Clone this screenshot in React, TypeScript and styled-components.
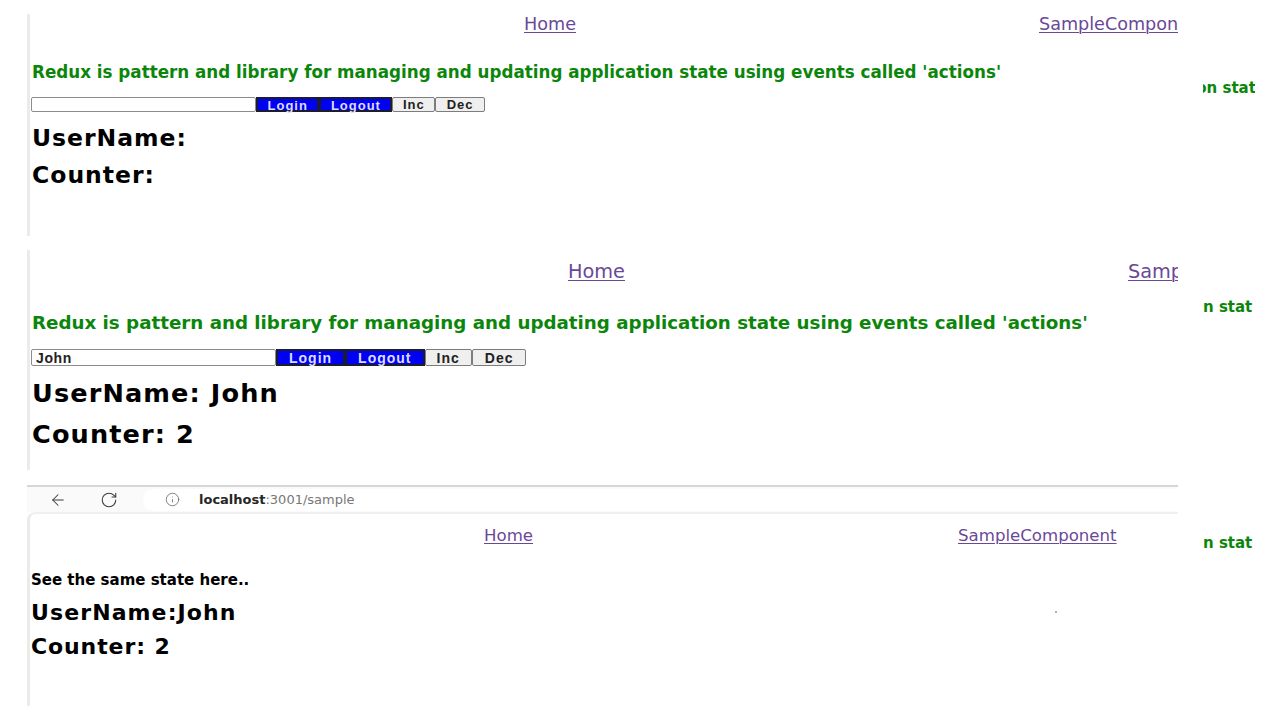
import React from "react";
import styled, { createGlobalStyle } from "styled-components";
import { ArrowLeft, RotateCw, Info } from "lucide-react";

const Global = createGlobalStyle`
  html, body { margin: 0; padding: 0; background: #ffffff; }
  body {
    width: 1280px;
    height: 720px;
    overflow: hidden;
    font-family: "DejaVu Sans", "Open Sans", sans-serif;
  }
`;

const GREEN = "#0b860b";
const LINK = "#6a4898";

const Page = styled.main`
  display: flex;
  flex-direction: column;
  padding-top: 14px;
`;

const Row = styled.section<{ $h: number; $gap: number }>`
  display: flex;
  align-items: flex-start;
  height: ${(p) => p.$h}px;
  margin-top: ${(p) => p.$gap}px;
`;

const Frame = styled.div<{ $bordered?: boolean }>`
  position: relative;
  flex: none;
  margin-left: 27px;
  width: 1151px;
  height: 100%;
  box-sizing: border-box;
  overflow: hidden;
  display: flex;
  flex-direction: column;
  border-left: ${(p) => (p.$bordered ? "3px solid #ebebeb" : "none")};
  padding-left: ${(p) => (p.$bordered ? "2px" : "0")};
`;

const Nav = styled.nav<{ $top: number; $h: number; $pad: number; $gap: number }>`
  display: flex;
  align-items: center;
  flex: none;
  height: ${(p) => p.$h}px;
  margin-top: ${(p) => p.$top}px;
  padding-left: ${(p) => p.$pad}px;
  gap: ${(p) => p.$gap}px;
  white-space: nowrap;
`;

const NavLink = styled.a<{ $size: number }>`
  flex: none;
  font-family: "DejaVu Sans", sans-serif;
  font-size: ${(p) => p.$size}px;
  color: ${LINK};
  text-decoration: underline;
  text-underline-offset: 2px;
  text-decoration-thickness: 1px;
`;

const Lead = styled.p<{ $top: number; $size: number; $lh: number }>`
  margin: ${(p) => p.$top}px 0 0;
  font-weight: bold;
  font-size: ${(p) => p.$size}px;
  line-height: ${(p) => p.$lh}px;
  color: ${GREEN};
  white-space: nowrap;
`;

const Controls = styled.div<{ $top: number; $h: number }>`
  display: flex;
  flex: none;
  margin-top: ${(p) => p.$top}px;
  margin-left: -1px;
  height: ${(p) => p.$h}px;
`;

const NameInput = styled.input<{ $w: number; $size: number }>`
  width: ${(p) => p.$w}px;
  height: 100%;
  box-sizing: border-box;
  margin: 0;
  border: 1px solid #8c8c8c;
  border-radius: 2px;
  padding: 0 4px;
  font-family: "Liberation Sans", Arial, sans-serif;
  font-weight: bold;
  font-size: ${(p) => p.$size}px;
  letter-spacing: 0.6px;
  color: #222;
  background: #fff;
  outline: none;
`;

const ActionButton = styled.button<{ $primary?: boolean; $size: number; $pad: number }>`
  height: 100%;
  box-sizing: border-box;
  margin: 0;
  padding: 0 ${(p) => p.$pad}px;
  font-family: "Liberation Sans", Arial, sans-serif;
  font-weight: bold;
  font-size: ${(p) => p.$size}px;
  letter-spacing: 1px;
  line-height: 1;
  background: ${(p) => (p.$primary ? "#0000f2" : "#efefef")};
  color: ${(p) => (p.$primary ? "#dcdcff" : "#222")};
  border: ${(p) => (p.$primary ? "2px solid #1c1c30" : "1px solid #7d7d7d")};
  border-radius: ${(p) => (p.$primary ? "0" : "2px")};
  cursor: pointer;
`;

const Heading = styled.h2<{ $top: number; $size: number; $lh: number; $ls: number }>`
  margin: ${(p) => p.$top}px 0 0;
  font-weight: bold;
  font-size: ${(p) => p.$size}px;
  line-height: ${(p) => p.$lh}px;
  letter-spacing: ${(p) => p.$ls}px;
  color: #000;
  white-space: nowrap;
`;

const Chrome = styled.header`
  display: flex;
  align-items: center;
  flex: none;
  height: 27px;
  box-sizing: border-box;
  border-top: 2px solid #d6d6d6;
  background: #fafafa;
  padding-left: 22px;
  color: #3a3a3a;
`;

const ChromeIcon = styled.span<{ $gap: number }>`
  display: flex;
  align-items: center;
  margin-left: ${(p) => p.$gap}px;
`;

const AddressPill = styled.div`
  display: flex;
  align-items: center;
  flex: 1;
  height: 22px;
  margin-left: 25px;
  padding-left: 22px;
  gap: 19px;
  border-radius: 11px 0 0 11px;
  background: #ffffff;
  color: #6a6a6a;
`;

const Url = styled.span`
  font-family: "DejaVu Sans", sans-serif;
  font-size: 13px;
  color: #777;
  white-space: nowrap;
`;

const Host = styled.b`
  color: #262626;
`;

const Viewport = styled.div`
  position: relative;
  flex: 1;
  display: flex;
  flex-direction: column;
  box-sizing: border-box;
  border-left: 3px solid #ebebeb;
  border-top: 2px solid #f0f0f0;
  border-top-left-radius: 8px;
  padding-left: 1px;
`;

const Speck = styled.span`
  position: absolute;
  left: 1025px;
  top: 97px;
  width: 2px;
  height: 2px;
  border-radius: 1px;
  background: #9b92b8;
`;

const Side = styled.aside<{ $top: number; $indent: number }>`
  flex: none;
  margin-left: 25px;
  width: 52px;
  overflow: hidden;
  padding-top: ${(p) => p.$top}px;
  font-weight: bold;
  font-size: 15px;
  line-height: 18px;
  color: ${GREEN};
  white-space: nowrap;
  text-indent: ${(p) => p.$indent}px;
`;

const LEAD_TEXT =
  "Redux is pattern and library for managing and updating application state using events called 'actions'";

type PanelCfg = {
  nav: { top: number; h: number; pad: number; gap: number; size: number };
  lead: { top: number; size: number; lh: number };
  controls: { top: number; h: number; w: number; size: number; pad: number };
  heading: { size: number; lh: number; ls: number; gaps: [number, number] };
  user: string;
  counter: string;
};

const panels: PanelCfg[] = [
  {
    nav: { top: 0, h: 20, pad: 492, gap: 463, size: 17.6 },
    lead: { top: 28, size: 16.75, lh: 20 },
    controls: { top: 15, h: 15, w: 225, size: 13, pad: 9.5 },
    heading: { size: 23.5, lh: 28, ls: 1, gaps: [12, 9] },
    user: "",
    counter: "",
  },
  {
    nav: { top: 10, h: 22, pad: 536, gap: 503, size: 19.3 },
    lead: { top: 30, size: 18.25, lh: 22 },
    controls: { top: 15, h: 17, w: 245, size: 14, pad: 11 },
    heading: { size: 25.6, lh: 30, ls: 1.1, gaps: [12, 11] },
    user: " John",
    counter: " 2",
  },
];

const StatePanel: React.FC<{ cfg: PanelCfg }> = ({ cfg }) => (
  <Frame $bordered>
    <Nav $top={cfg.nav.top} $h={cfg.nav.h} $pad={cfg.nav.pad} $gap={cfg.nav.gap}>
      <NavLink $size={cfg.nav.size} href="#home">Home</NavLink>
      <NavLink $size={cfg.nav.size} href="#sample">SampleComponent</NavLink>
    </Nav>
    <Lead $top={cfg.lead.top} $size={cfg.lead.size} $lh={cfg.lead.lh}>
      {LEAD_TEXT}
    </Lead>
    <Controls $top={cfg.controls.top} $h={cfg.controls.h}>
      <NameInput
        $w={cfg.controls.w}
        $size={cfg.controls.size}
        defaultValue={cfg.user.trim()}
        aria-label="user name"
      />
      <ActionButton $primary $size={cfg.controls.size} $pad={cfg.controls.pad}>Login</ActionButton>
      <ActionButton $primary $size={cfg.controls.size} $pad={cfg.controls.pad}>Logout</ActionButton>
      <ActionButton $size={cfg.controls.size} $pad={cfg.controls.pad}>Inc</ActionButton>
      <ActionButton $size={cfg.controls.size} $pad={cfg.controls.pad + 1}>Dec</ActionButton>
    </Controls>
    <Heading $top={cfg.heading.gaps[0]} $size={cfg.heading.size} $lh={cfg.heading.lh} $ls={cfg.heading.ls}>
      UserName:{cfg.user}
    </Heading>
    <Heading $top={cfg.heading.gaps[1]} $size={cfg.heading.size} $lh={cfg.heading.lh} $ls={cfg.heading.ls}>
      Counter:{cfg.counter}
    </Heading>
  </Frame>
);

const SamplePanel: React.FC = () => (
  <Frame>
    <Chrome>
      <ChromeIcon $gap={0}>
        <ArrowLeft size={18} strokeWidth={1.4} />
      </ChromeIcon>
      <ChromeIcon $gap={33}>
        <RotateCw size={18} strokeWidth={1.4} />
      </ChromeIcon>
      <AddressPill>
        <Info size={15} strokeWidth={1.3} />
        <Url>
          <Host>localhost</Host>:3001/sample
        </Url>
      </AddressPill>
    </Chrome>
    <Viewport>
      <Nav $top={11} $h={20} $pad={453} $gap={425}>
        <NavLink $size={16.6} href="#home">Home</NavLink>
        <NavLink $size={16.6} href="#sample">SampleComponent</NavLink>
      </Nav>
      <Heading $top={26} $size={15} $lh={18} $ls={0}>
        See the same state here..
      </Heading>
      <Heading $top={11} $size={22} $lh={26} $ls={1.1}>
        UserName:John
      </Heading>
      <Heading $top={8} $size={22} $lh={26} $ls={0.9}>
        Counter: 2
      </Heading>
      <Speck />
    </Viewport>
  </Frame>
);

export default function App() {
  return (
    <>
      <Global />
      <Page>
        <Row $h={222} $gap={0}>
          <StatePanel cfg={panels[0]} />
          <Side $top={65} $indent={-19}>tion state</Side>
        </Row>
        <Row $h={220} $gap={14}>
          <StatePanel cfg={panels[1]} />
          <Side $top={48} $indent={0}>n stat</Side>
        </Row>
        <Row $h={221} $gap={15}>
          <SamplePanel />
          <Side $top={49} $indent={0}>n stat</Side>
        </Row>
      </Page>
    </>
  );
}
